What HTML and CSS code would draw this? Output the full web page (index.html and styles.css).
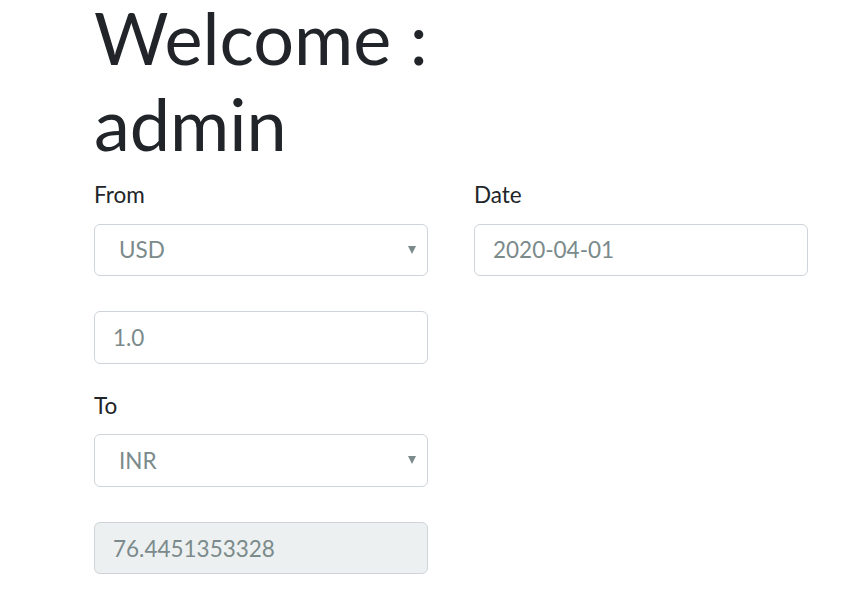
FILE: index.html
```html
<!DOCTYPE html>
<html>
<head>
<meta charset="utf-8">
<title>Welcome</title>
<link rel="stylesheet" href="styles.css">
</head>
<body>
<main class="page">
  <h1 class="title">Welcome :<br>admin</h1>
  <div class="row">
    <div class="col">
      <div class="group">
        <label class="label" for="from">From</label>
        <div class="select-wrap">
          <select id="from" class="control select"><option>USD</option></select>
          <span class="arrow"></span>
        </div>
      </div>
      <div class="group group-plain">
        <input class="control" type="text" value="1.0">
      </div>
      <div class="group">
        <label class="label" for="to">To</label>
        <div class="select-wrap">
          <select id="to" class="control select"><option>INR</option></select>
          <span class="arrow"></span>
        </div>
      </div>
      <div class="group group-plain">
        <input class="control control-disabled" type="text" value="76.4451353328" disabled>
      </div>
    </div>
    <div class="col">
      <div class="group">
        <label class="label" for="date">Date</label>
        <input id="date" class="control" type="text" value="2020-04-01">
      </div>
    </div>
  </div>
</main>
</body>
</html>
```

FILE: styles.css
```css
html, body {
  margin: 0;
  padding: 0;
  background: #ffffff;
}

body {
  font-family: Lato, "Open Sans", "Liberation Sans", sans-serif;
  color: #212529;
  overflow: hidden;
}

.page {
  padding-left: 94px;
}

.title {
  margin: -6px 0 11px 0;
  font-size: 72px;
  font-weight: 400;
  line-height: 1.2;
  color: #212529;
}

.row {
  display: grid;
  grid-template-columns: 334px 334px;
  column-gap: 46px;
}

.group {
  margin-bottom: 25px;
}

.group-plain {
  margin-top: 35px;
}

.label {
  display: block;
  font-size: 22.5px;
  line-height: 1.5;
  margin-bottom: 12px;
  color: #212529;
}

.control {
  display: block;
  box-sizing: border-box;
  width: 100%;
  height: 52.5px;
  margin: 0;
  padding: 0 18px;
  font-family: Lato, "Open Sans", "Liberation Sans", sans-serif;
  font-size: 22.5px;
  color: #7b8a8b;
  background: #ffffff;
  border: 1.5px solid #ced4da;
  border-radius: 6px;
  outline: none;
}

.control-disabled {
  background: #ecf0f1;
  opacity: 1;
  -webkit-text-fill-color: #7b8a8b;
}

.select-wrap {
  position: relative;
}

.select {
  -webkit-appearance: none;
  appearance: none;
  padding-left: 24px;
}

.arrow {
  position: absolute;
  right: 12px;
  top: 22px;
  width: 0;
  height: 0;
  border-left: 4px solid transparent;
  border-right: 4px solid transparent;
  border-top: 8px solid #7b8a8b;
  pointer-events: none;
}
```
